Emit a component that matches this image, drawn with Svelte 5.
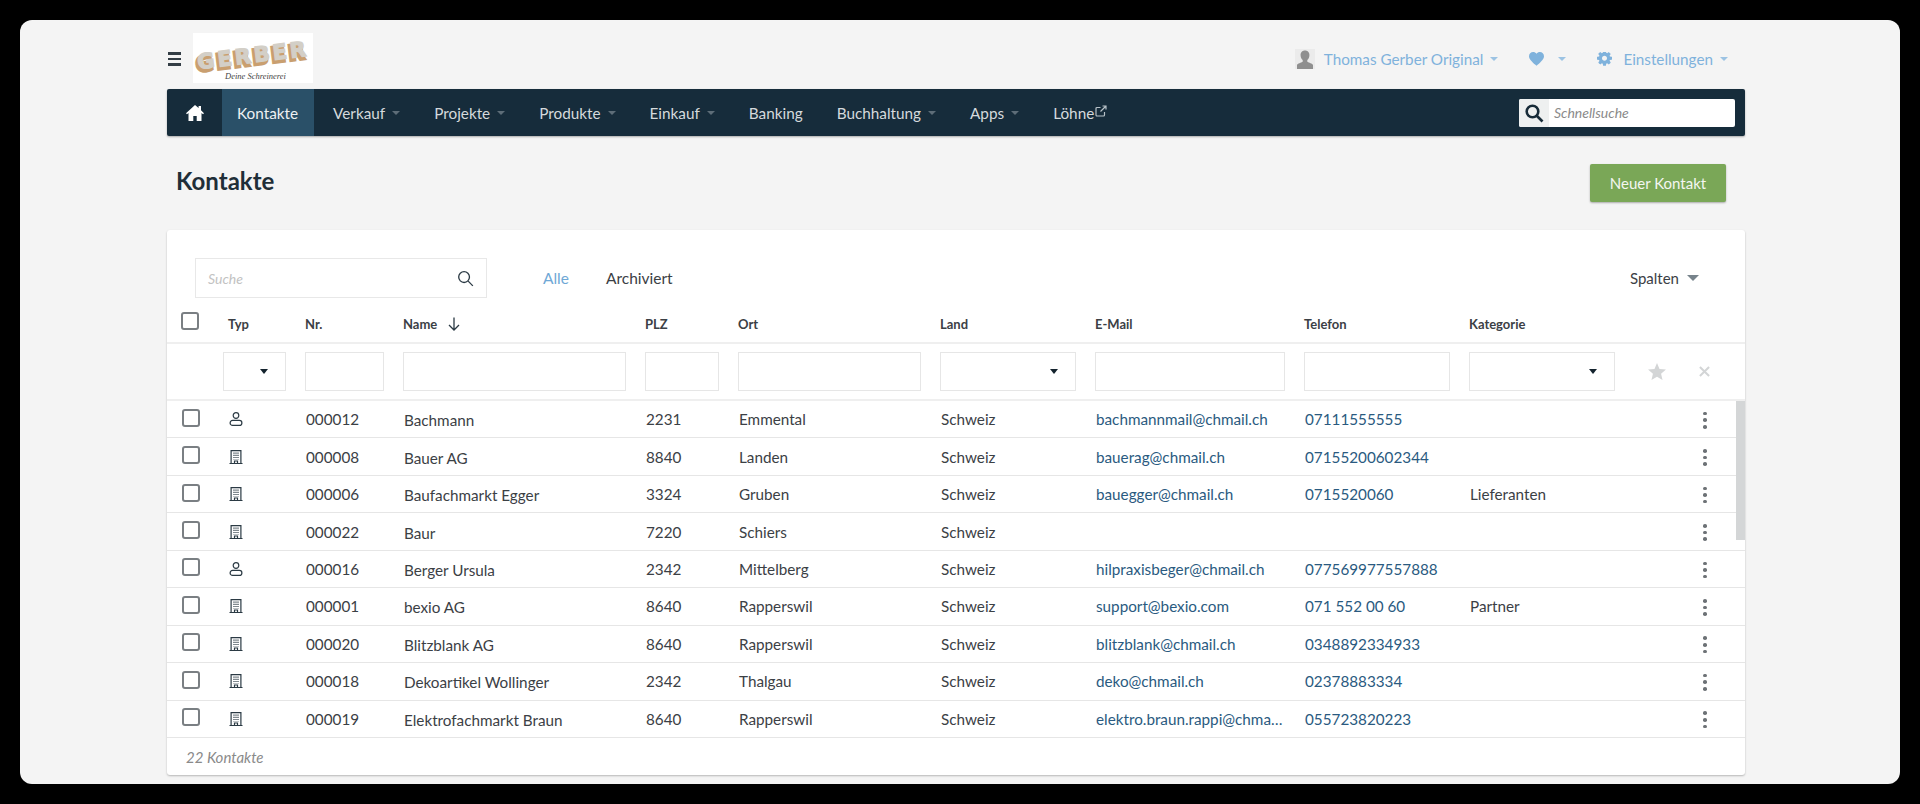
<script>
  const nav = [
    { label: 'Verkauf', caret: true },
    { label: 'Projekte', caret: true },
    { label: 'Produkte', caret: true },
    { label: 'Einkauf', caret: true },
    { label: 'Banking' },
    { label: 'Buchhaltung', caret: true },
    { label: 'Apps', caret: true }
  ];
  const heads = [
    { t: 'Typ' }, { t: 'Nr.' }, { t: 'Name', sort: true }, { t: 'PLZ' }, { t: 'Ort' },
    { t: 'Land' }, { t: 'E-Mail' }, { t: 'Telefon' }, { t: 'Kategorie' }
  ];
  const filters = [true, false, false, false, false, true, false, false, true];
  const rows = [
    ['p', '000012', 'Bachmann', '2231', 'Emmental', 'bachmannmail@chmail.ch', '07111555555', ''],
    ['c', '000008', 'Bauer AG', '8840', 'Landen', 'bauerag@chmail.ch', '07155200602344', ''],
    ['c', '000006', 'Baufachmarkt Egger', '3324', 'Gruben', 'bauegger@chmail.ch', '0715520060', 'Lieferanten'],
    ['c', '000022', 'Baur', '7220', 'Schiers', '', '', ''],
    ['p', '000016', 'Berger Ursula', '2342', 'Mittelberg', 'hilpraxisbeger@chmail.ch', '077569977557888', ''],
    ['c', '000001', 'bexio AG', '8640', 'Rapperswil', 'support@bexio.com', '071 552 00 60', 'Partner'],
    ['c', '000020', 'Blitzblank AG', '8640', 'Rapperswil', 'blitzblank@chmail.ch', '0348892334933', ''],
    ['c', '000018', 'Dekoartikel Wollinger', '2342', 'Thalgau', 'deko@chmail.ch', '02378883334', ''],
    ['c', '000019', 'Elektrofachmarkt Braun', '8640', 'Rapperswil', 'elektro.braun.rappi@chmail.ch', '055723820223', '']
  ];
  const gear = 'M1024 640q0-106-75-181t-181-75-181 75-75 181 75 181 181 75 181-75 75-181zm512-109v222q0 12-8 23t-20 13l-185 28q-19 54-39 91 35 50 107 138 10 12 10 25t-9 23q-27 37-99 108t-94 71q-12 0-26-9l-138-108q-44 23-91 38-16 136-29 186-7 28-36 28h-222q-14 0-24.500-8.500t-11.500-21.500l-28-184q-49-16-90-37l-141 107q-10 9-25 9-14 0-25-11-126-114-165-168-7-10-7-23 0-12 8-23 15-21 51-66.500t54-70.500q-27-50-41-99l-183-27q-13-2-21-12.500t-8-23.500v-222q0-12 8-23t19-13l186-28q14-46 39-92-40-57-107-138-10-12-10-24 0-10 9-23 26-36 98.500-107.500t94.500-71.500q13 0 26 10l138 107q44-23 91-38 16-136 29-186 7-28 36-28h222q14 0 24.500 8.500t11.500 21.500l28 184q49 16 90 37l142-107q9-9 24-9 13 0 25 10 129 119 165 170 7 8 7 22 0 12-8 23-15 21-51 66.500t-54 70.500q26 50 41 98l183 28q13 2 21 12.500t8 23.500z';
</script>

<div class="frame">
  <div class="page">
    <header class="top">
      <div class="burger"><i></i><i></i><i></i></div>
      <svg class="logo" viewBox="0 0 120 50" width="120" height="50">
        <rect width="120" height="50" fill="#fff" />
        <g transform="rotate(-7 60 22)" font-family="'DejaVu Sans', sans-serif" font-weight="700" font-size="21" letter-spacing="3">
          <text x="2" y="32" fill="#c99f70" stroke="#c99f70" stroke-width="3">GERBER</text>
          <text x="4" y="29.500" fill="#d3cfc7" stroke="#d3cfc7" stroke-width="1.200">GERBER</text>
        </g>
        <text x="32" y="46" font-family="'Liberation Serif', serif" font-style="italic" font-size="8.500" fill="#444">Deine Schreinerei</text>
      </svg>
      <div class="user">
        <svg class="avatar" viewBox="0 0 20 20" width="20" height="20">
          <rect width="20" height="20" fill="#ebebeb" />
          <path d="M10 1.500c-3 0-4.600 2.300-4.400 5 .1 2 1 3.600 2.100 4.500v1.800c-1.500 1-5.200 1.700-5.700 3.200V20h16v-4c-.5-1.500-4.200-2.200-5.700-3.200V11c1.100-.9 2-2.500 2.100-4.500.2-2.700-1.400-5-4.400-5z" fill="#8f8f8f" />
        </svg>
        <span class="toplink name">Thomas Gerber Original</span><span class="caret blue c1"></span>
        <svg class="heart" viewBox="2 3 20 18.500" width="15" height="14"><path fill="#7fb2dc" d="M12 21.350l-1.450-1.320C5.400 15.360 2 12.280 2 8.500 2 5.420 4.420 3 7.500 3c1.740 0 3.410.81 4.500 2.090C13.090 3.810 14.760 3 16.500 3 19.580 3 22 5.420 22 8.500c0 3.780-3.400 6.860-8.550 11.540L12 21.350z" /></svg>
        <span class="caret blue c2"></span>
        <svg class="gear" viewBox="0 0 1536 1536" width="15" height="15"><path fill="#7fb2dc" d={gear} /></svg>
        <span class="toplink sets">Einstellungen</span><span class="caret blue c3"></span>
      </div>
    </header>

    <nav class="nav">
      <div class="home">
        <svg viewBox="0 0 18 16" width="18" height="16"><path fill="#fff" d="M9 0 0 8.200l1 1.100 1.500-1.300V16h4.800v-5h3.400v5h4.800V8l1.500 1.300 1-1.100L15 5.200V1h-2.400v2L9 0z" /></svg>
      </div>
      <span class="item active">Kontakte</span>
      {#each nav as n}
        <span class="item">{n.label}{#if n.caret}<span class="caret grey"></span>{/if}</span>
      {/each}
      <span class="item">Löhne<svg class="ext" viewBox="0 0 12 12" width="12" height="12" fill="none" stroke="#b8c2c8" stroke-width="1.200"><path d="M9.500 7v3a1 1 0 0 1-1 1H2a1 1 0 0 1-1-1V3.500a1 1 0 0 1 1-1h3.500M7.500 1H11v3.500M11 1 5.500 6.500" /></svg></span>
      <div class="quick">
        <span class="qicon">
          <svg viewBox="0 0 20 20" width="20" height="20" fill="none" stroke="#182c39" stroke-width="2.600"><circle cx="8.500" cy="8.500" r="5.800" /><path d="m13 13 5.500 5.500" /></svg>
        </span>
        <span class="qtext">Schnellsuche</span>
      </div>
    </nav>

    <div class="titlebar">
      <h1>Kontakte</h1>
      <button class="new">Neuer Kontakt</button>
    </div>

    <section class="card">
      <div class="tools">
        <div class="search">
          <span>Suche</span>
          <svg viewBox="0 0 18 18" width="17" height="17" fill="none" stroke="#2b3a44" stroke-width="1.400"><circle cx="7.500" cy="7.500" r="5.700" /><path d="m11.800 11.800 5 5" /></svg>
        </div>
        <a class="tab on" href="#alle">Alle</a>
        <a class="tab" href="#arch">Archiviert</a>
        <div class="spalten">Spalten<span class="caret big"></span></div>
      </div>

      <div class="cols head">
        <div class="cb-cell"><span class="cb"></span></div>
        {#each heads as h, i}
          <div class="th" class:first={i === 0}>{h.t}{#if h.sort}
            <svg class="arrow" viewBox="0 0 12 14" width="12" height="14" fill="none" stroke="#2b3a44" stroke-width="1.300"><path d="M6 .5v12.500M1 8l5 5 5-5" /></svg>
          {/if}</div>
        {/each}
      </div>

      <div class="cols filt">
        <div></div>
        {#each filters as f}
          <div class="fcell"><div class="inp">{#if f}<span class="dd"></span>{/if}</div></div>
        {/each}
        <div class="factions">
          <svg viewBox="2 2 20 19" width="18" height="17"><path fill="#d3d5d6" d="M12 17.270 18.180 21l-1.640-7.030L22 9.240l-7.190-.61L12 2 9.190 8.630 2 9.240l5.460 4.730L5.820 21z" /></svg>
          <svg viewBox="0 0 12 12" width="11" height="11" stroke="#d3d5d6" stroke-width="2.200"><path d="m1 1 10 10M11 1 1 11" /></svg>
        </div>
      </div>

      <div class="body">
        {#each rows as r}
          <div class="cols row">
            <div class="cb-cell"><span class="cb"></span></div>
            <div class="td icon">
              {#if r[0] === 'p'}
                <svg viewBox="0 0 14 14" width="14" height="14" fill="none" stroke="#2b3a44" stroke-width="1.200"><circle cx="7" cy="3.500" r="2.800" /><rect x="1.100" y="8.400" width="11.800" height="5" rx="2.500" /></svg>
              {:else}
                <svg viewBox="0 0 14 14" width="14" height="14"><path fill="none" stroke="#2b3a44" stroke-width="1.200" d="M2.100 13.500V.6h9.800v12.900M.5 13.500h13M5.500 13.500v-2.500h3v2.500" /><path stroke="#2b3a44" stroke-width="1.200" stroke-dasharray="1.200 1" d="M5 2.500v7M7 2.500v7M9 2.500v7" /></svg>
              {/if}
            </div>
            <div class="td">{r[1]}</div>
            <div class="td nm">{r[2]}</div>
            <div class="td">{r[3]}</div>
            <div class="td">{r[4]}</div>
            <div class="td">Schweiz</div>
            <div class="td link ell">{r[5]}</div>
            <div class="td link">{r[6]}</div>
            <div class="td">{r[7]}</div>
            <div class="kebab"><i></i><i></i><i></i></div>
          </div>
        {/each}
        <div class="thumb"></div>
      </div>

      <div class="foot">22 Kontakte</div>
    </section>
  </div>
</div>

<style>
  :global(body) {
    margin: 0;
    background: #000;
    font-family: Lato, "Liberation Sans", sans-serif;
    color: #3b4045;
  }
  .frame { padding: 20px; height: 804px; box-sizing: border-box; }
  .page {
    width: 1880px;
    height: 764px;
    box-sizing: border-box;
    background: #f4f4f4;
    border-radius: 12px;
    padding: 0 155px 0 147px;
    overflow: hidden;
  }
  .top { display: flex; align-items: flex-start; height: 68px; padding-top: 13px; box-sizing: border-box; }
  .burger { width: 13px; display: flex; flex-direction: column; gap: 3px; margin: 19px 12px 0 1px; }
  .burger i { display: block; height: 2.500px; background: #333d45; }
  .logo { display: block; }
  .user { margin-left: auto; display: flex; align-items: center; margin-right: 17px; padding-top: 16px; }
  .avatar { display: block; margin-right: 9px; margin-left: -3px; }
  .toplink { font-size: 15.250px; color: #7fb2dc; }
  .caret { display: inline-block; width: 0; height: 0; border-left: 4px solid transparent; border-right: 4px solid transparent; border-top: 4px solid #8a959c; }
  .caret.blue { border-top-color: #9cc3e3; }
  .c1 { margin: 0 31px 0 7px; }
  .c2 { margin: 0 31px 0 14px; }
  .c3 { margin-left: 7px; }
  .gear { margin-right: 11px; }

  .nav {
    display: flex;
    align-items: center;
    height: 47px;
    background: #162c3b;
    border-radius: 2px;
    box-shadow: 0 1px 2px rgba(0,0,0,.3);
    color: #d5dadd;
    font-size: 15.300px;
    margin-top: 1px;
  }
  .home { width: 55px; display: flex; justify-content: center; }
  .home svg { display: block; }
  .item { height: 47px; display: flex; align-items: center; padding: 0 15px; white-space: nowrap; margin-right: 4px; }
  .item.active { background: #2a5068; color: #eef1f3; padding-right: 16px; }
  .caret.grey { margin-left: 7px; border-top-color: #5d6d78; }
  .ext { margin-left: 1px; margin-top: -4px; }
  .quick { margin-left: auto; margin-right: 10px; width: 216px; height: 28px; background: #fff; border-radius: 2px; display: flex; align-items: center; overflow: hidden; }
  .qicon { width: 30px; height: 28px; background: #eef0f0; display: flex; align-items: center; justify-content: center; }
  .qtext { font-style: italic; font-size: 14px; color: #8a8a8a; margin-left: 5px; }

  .titlebar { display: flex; align-items: flex-start; justify-content: space-between; height: 94px; padding: 28px 19px 0 9px; box-sizing: border-box; }
  h1 { margin: 2px 0 0; font-size: 24px; line-height: 29px; font-weight: 700; color: #1f2e38; }
  .new { width: 136px; height: 38px; background: #7aa757; border: 0; border-radius: 2px; color: #f4f6f1; font: 15px Lato, sans-serif; box-shadow: 0 1px 2px rgba(0,0,0,.3); }

  .card { background: #fff; border-radius: 3px; box-shadow: 0 1px 2px rgba(0,0,0,.25); height: 545px; }
  .tools { display: flex; align-items: center; padding: 23px 0 0 28px; box-sizing: border-box; height: 73px; font-size: 15.500px; }
  .search { width: 292px; height: 40px; box-sizing: border-box; border: 1px solid #e8e8e8; display: flex; align-items: center; justify-content: space-between; padding: 0 12px; margin-right: 56px; }
  .search span { font-style: italic; font-size: 14px; color: #c2c2c2; }
  .tab { color: #3b4045; text-decoration: none; margin-right: 37px; }
  .tab.on { color: #6fa8d6; }
  .spalten { margin-left: auto; margin-right: 46px; display: flex; align-items: center; font-size: 15px; }
  .caret.big { border-left-width: 6px; border-right-width: 6px; border-top-width: 6px; margin-left: 8px; border-top-color: #77838b; }

  .cols { display: grid; grid-template-columns: 56px 82px 98px 242px 93px 202px 155px 209px 165px 169px 107px; }
  .head { height: 41px; align-items: center; border-bottom: 2px solid #efefef; box-sizing: border-box; }
  .th { font-size: 13px; font-weight: 700; color: #3b4045; display: flex; align-items: center; padding-top: 3px; }
  .th.first { padding-left: 5px; }
  .arrow { margin-left: 11px; }
  .cb-cell { padding-left: 14px; display: flex; align-items: center; }
  .row .cb-cell { padding-left: 15px; margin-top: -3px; }
  .cb { display: block; width: 18px; height: 18px; box-sizing: border-box; border: 2px solid #7a7f83; border-radius: 3px; background: #fff; }
  .head .cb-cell { margin-top: -3px; }
  .filt { height: 57px; align-items: center; border-bottom: 2px solid #efefef; box-sizing: border-box; }
  .fcell { padding-right: 19px; }
  .fcell:nth-child(10) { padding-right: 23px; }
  .inp { height: 39px; box-sizing: border-box; border: 1px solid #e6e6e6; position: relative; }
  .dd { position: absolute; right: 17px; top: 16px; width: 0; height: 0; border-left: 4.500px solid transparent; border-right: 4.500px solid transparent; border-top: 5px solid #14232e; }
  .factions { display: flex; align-items: center; gap: 33px; padding-left: 10px; }

  .body { position: relative; }
  .row { height: 37.440px; align-items: center; border-bottom: 1px solid #e6e6e6; box-sizing: border-box; font-size: 15.250px; }
  .td { padding-left: 1px; white-space: nowrap; padding-right: 19px; }
  .td.icon { display: flex; padding-left: 6px; margin-top: 0; }
  .td.icon svg { display: block; }
  .nm { padding-top: 2px; }
  .link { color: #2a5a80; }
  .ell { overflow: hidden; text-overflow: ellipsis; }
  .kebab { display: flex; flex-direction: column; gap: 3px; align-items: flex-start; padding-left: 65px; padding-top: 2px; }
  .kebab i { display: block; width: 3.600px; height: 3.600px; border-radius: 50%; background: #6d7276; }
  .thumb { position: absolute; right: 0; top: 0; width: 9px; height: 139px; background: #d4d6d7; }
  .foot { font-style: italic; font-size: 15px; color: #8a8a8a; padding: 10px 19px; }
</style>
